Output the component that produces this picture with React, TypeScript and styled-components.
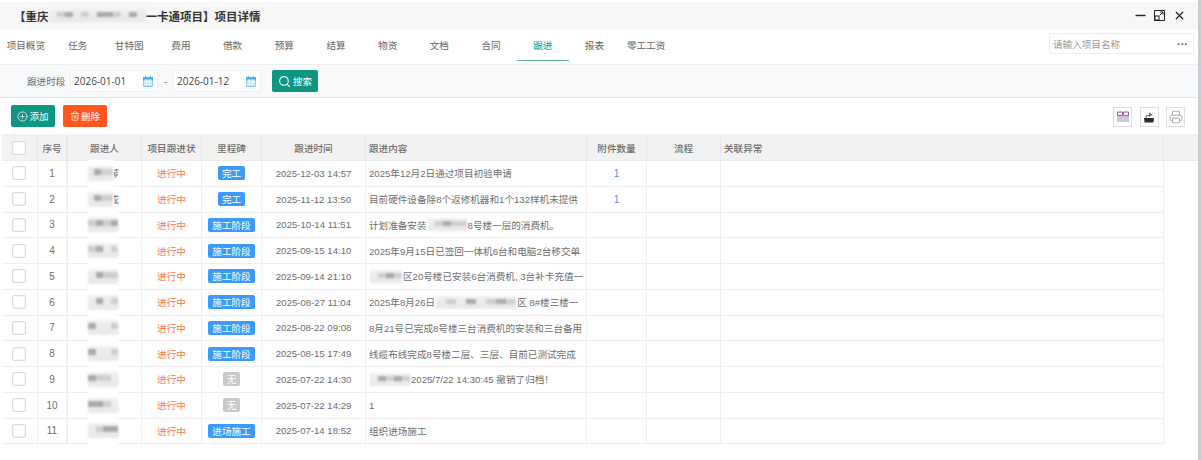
import React from 'react';
import styled, { createGlobalStyle } from 'styled-components';
import { CirclePlus, Printer, Search, Trash2, X } from 'lucide-react';

const GlobalStyle = createGlobalStyle`
  html, body {
    margin: 0;
    padding: 0;
    background: #fff;
    overflow: hidden;
  }
  * {
    box-sizing: border-box;
  }
`;

const FONT = `'Liberation Sans', 'Noto Sans CJK SC', sans-serif`;
const GREEN = '#0f9683';
const COLUMNS = '35px 30px 74px 60px 60px 104px 221px 60px 74px 443px 34px';

const Page = styled.div`
  width: 1201px;
  height: 460px;
  padding-top: 2px;
  border-right: 3px solid #c9ccd5;
  font-family: ${FONT};
  font-size: 9.6px;
  color: #6e6e6e;
  overflow: hidden;
`;
const TitleBar = styled.div`
  height: 27px;
  padding: 0 12px 0 14px;
  display: flex;
  align-items: center;
  justify-content: space-between;
  background: #f7f7f7;
`;
const Title = styled.div`
  display: flex;
  align-items: center;
  font-size: 11.5px;
  font-weight: 700;
  color: #333;
`;
const WindowButtons = styled.div`
  display: flex;
  align-items: center;
  gap: 8px;
  color: #222;
`;
const Mosaic = styled.span<{ $width: number; $height?: number }>`
  display: inline-grid;
  grid-auto-flow: column;
  grid-auto-columns: 1fr;
  width: ${(p) => p.$width}px;
  height: ${(p) => p.$height ?? 13}px;
  vertical-align: middle;
  background: #efefef;
  border-radius: 4px;
  filter: blur(0.8px);
`;
const MosaicCell = styled.span<{ $shade: string }>`
  background: linear-gradient(
    to bottom,
    #f0f0f0 0 22%,
    ${(p) => p.$shade} 22% 62%,
    #e9e9e9 62% 100%
  );
`;
const Tabs = styled.div`
  height: 31px;
  margin-top: 1px;
  padding-right: 4px;
  display: flex;
  align-items: stretch;
  background: #fff;
`;
const Tab = styled.div<{ $active?: boolean }>`
  width: 51.7px;
  display: flex;
  align-items: center;
  justify-content: center;
  white-space: nowrap;
  color: ${(p) => (p.$active ? GREEN : '#666')};
  border-bottom: 1px solid ${(p) => (p.$active ? '#5dba8c' : 'transparent')};
`;
const ProjectSearch = styled.div`
  width: 145px;
  height: 21px;
  margin: 3px 0 0 auto;
  padding: 0 5px 0 3px;
  display: flex;
  align-items: center;
  justify-content: space-between;
  border: 1px solid #eee;
  border-radius: 2px;
  color: #999;
`;
const MoreDots = styled.span`
  color: #555;
  font-size: 11px;
  font-weight: 700;
`;
const FilterBar = styled.div`
  height: 34px;
  margin-top: 3px;
  padding-left: 27px;
  display: flex;
  align-items: center;
  background: #f8f9fb;
  border-top: 1px solid #f0f0f0;
  border-bottom: 1px solid #e4e4e4;
`;
const FilterLabel = styled.span`
  width: 43px;
`;
const DateField = styled.div`
  width: 88px;
  height: 22px;
  padding: 0 4px 0 3px;
  display: flex;
  align-items: center;
  justify-content: space-between;
  background: #fff;
  border: 1px solid #efefef;
  border-radius: 2px;
  font-family: 'Open Sans', ${FONT};
  font-size: 10px;
  color: #444;
`;
const DateDash = styled.span`
  width: 15px;
  text-align: center;
`;
const ActionButton = styled.button<{ $color: string; $width: number }>`
  width: ${(p) => p.$width}px;
  height: 22px;
  padding: 0;
  display: flex;
  align-items: center;
  justify-content: center;
  gap: 1px;
  background: ${(p) => p.$color};
  border: none;
  border-radius: 2px;
  color: #fff;
  font-family: ${FONT};
  font-size: 9.5px;
`;
const SearchButton = styled(ActionButton)`
  margin-left: 11px;
  gap: 2px;
`;
const Toolbar = styled.div`
  height: 37px;
  padding: 7px 13px 0 11px;
  display: flex;
  gap: 8px;
  border-bottom: 1px solid #f2f2f2;
`;
const ToolIcons = styled.div`
  margin-left: auto;
  padding-top: 2px;
  display: flex;
  gap: 7.5px;
`;
const ToolIcon = styled.div`
  width: 19px;
  height: 20px;
  display: flex;
  align-items: center;
  justify-content: center;
  border: 1px solid #dfdfdf;
  background: #fff;
`;
const Grid = styled.div`
  margin-left: 3px;
  width: 1195px;
`;
const HeaderRow = styled.div`
  height: 26px;
  display: grid;
  grid-template-columns: ${COLUMNS};
  margin-left: -1px;
  padding-left: 1px;
  background: #f2f2f2;
  border-top: 1px solid #eee;
  border-bottom: 1px solid #eaeaea;
  font-weight: 500;
`;
const Row = styled.div`
  height: 25.75px;
  display: grid;
  grid-template-columns: ${COLUMNS};
`;
const Cell = styled.div<{ $left?: boolean; $wide?: boolean }>`
  position: relative;
  min-width: 0;
  display: flex;
  align-items: center;
  justify-content: ${(p) => (p.$left ? 'flex-start' : 'center')};
  padding-left: ${(p) => (p.$left ? '3px' : '0')};
  white-space: nowrap;
  overflow: visible;
  border-right: ${(p) => (p.$wide ? 2 : 1)}px solid #efefef;
  border-bottom: 1px solid #eee;
`;
const HeadCell = styled(Cell)`
  border-bottom: none;
  border-right-color: #e7e7e7;
`;
const CheckCell = styled(Cell)`
  padding-right: 3px;
`;
const HeadCheckCell = styled(HeadCell)`
  padding-right: 3px;
`;
const IndexCell = styled(Cell)`
  font-size: 10px;
`;
const Filler = styled.div``;
const Checkbox = styled.span`
  width: 14px;
  height: 14px;
  background: #fff;
  border: 1px solid #dcdcdc;
  border-radius: 2px;
  box-shadow: inset 0 0 0 0.5px #ececec;
`;
const NameSuffix = styled.span`
  margin-left: 19px;
`;
const NameMask = styled.span<{ $width: number }>`
  position: absolute;
  left: 20px;
  top: -1px;
  bottom: -1px;
  width: ${(p) => p.$width}px;
  display: flex;
  align-items: center;
  background: #fff;
`;
const Status = styled.span`
  color: #ff7640;
`;
const Tag = styled.span<{ $muted?: boolean }>`
  height: 14px;
  padding: 0 4px;
  display: flex;
  align-items: center;
  background: ${(p) => (p.$muted ? '#c9c9c9' : '#3a9bfb')};
  border-radius: 2px;
  color: #fff;
`;
const FileCount = styled.span`
  color: #4a97d8;
  font-size: 10px;
`;
const InlineMosaic = styled.span`
  display: inline-flex;
  margin: 0 1px;
`;

const CalendarIcon = () => (
  <svg width="10" height="11" viewBox="0 0 10 11" fill="none">
    <rect x="0.5" y="1.5" width="9" height="9" rx="1" fill="#bfe6f8" stroke="#5cbbe9" />
    <rect x="0" y="1" width="10" height="2.6" fill="#4fb4e6" />
    <path d="M2.5 0v2M7.5 0v2" stroke="#4fb4e6" />
    <path d="M0 6h10M0 8.2h10M3.3 3.5v7M6.7 3.5v7" stroke="#fff" strokeWidth="0.7" />
  </svg>
);

const MinimizeIcon = () => (
  <svg width="11" height="11" viewBox="0 0 11 11">
    <path d="M0.5 5.5h10" stroke="#222" strokeWidth="1.4" />
  </svg>
);

const RestoreIcon = () => (
  <svg width="11" height="11" viewBox="0 0 11 11" fill="none" stroke="#222">
    <path d="M4 0.5h6.5V7M4 .5H.5v10h10V7" />
    <rect x="1" y="6" width="4" height="4" strokeWidth="1" />
    <path d="M9 2 5.8 5.2M6.3 2H9v2.7" />
  </svg>
);

const ColumnsIcon = () => (
  <svg width="12" height="12" viewBox="0 0 12 12" fill="none" strokeWidth="1">
    <path d="M.5 1h5v3.5h-5zM6.5 1h5v3.5h-5z" stroke="#9a5a92" />
    <path d="M1 4.5V11M3 4.5V11M5 4.5V11M7 4.5V11M9 4.5V11M11 4.5V11" stroke="#8072b0" strokeWidth="0.8" />
  </svg>
);

const ExportIcon = () => (
  <svg width="12" height="12" viewBox="0 0 12 12">
    <path d="M1 7h10l-.6 4.5H1.6z" fill="#2a2a2a" />
    <path d="M3.2 7V4.6h3.2" fill="none" stroke="#666" />
    <path d="M6 1.5 9.5 3.8 6 6z" fill="#35708f" />
  </svg>
);

type MaskedTextProps = { width: number; shades: string[]; height?: number };

const MaskedText = ({ width, shades, height }: MaskedTextProps) => (
  <Mosaic $width={width} $height={height}>
    {shades.map((shade, i) => (
      <MosaicCell key={i} $shade={shade} />
    ))}
  </Mosaic>
);

const tabs = ['项目概览', '任务', '甘特图', '费用', '借款', '预算', '结算', '物资', '文档', '合同', '跟进', '报表', '零工工资'];

const headers = ['序号', '跟进人', '项目跟进状', '里程碑', '跟进时间'];

const L = '#ececec';
const M = '#cfcfcf';
const D = '#aaaaaa';

type Record = {
  suffix: string;
  shades: string[];
  stage: string;
  time: string;
  content: React.ReactNode;
  files?: number;
};

const records: Record[] = [
  { suffix: '琴', shades: [L, D, M, M], stage: '完工', time: '2025-12-03 14:57', content: '2025年12月2日通过项目初验申请', files: 1 },
  { suffix: '成', shades: [L, D, M, M], stage: '完工', time: '2025-11-12 13:50', content: '目前硬件设备除8个返修机器和1个132样机未提供', files: 1 },
  { suffix: '森', shades: [M, D, M, D], stage: '施工阶段', time: '2025-10-14 11:51', content: <>计划准备安装<InlineMosaic><MaskedText width={39} shades={[L, M, D, M, M]} /></InlineMosaic>8号楼一层的消费机。</> },
  { suffix: '森', shades: [M, D, L, M], stage: '施工阶段', time: '2025-09-15 14:10', content: '2025年9月15日已签回一体机6台和电脑2台移交单' },
  { suffix: '森', shades: [L, D, M, M], stage: '施工阶段', time: '2025-09-14 21:10', content: <><InlineMosaic><MaskedText width={32} shades={[L, M, D, M]} /></InlineMosaic>区20号楼已安装6台消费机, 3台补卡充值一</> },
  { suffix: '森', shades: [L, D, L, M], stage: '施工阶段', time: '2025-08-27 11:04', content: <>2025年8月26日<InlineMosaic><MaskedText width={80} shades={[L, M, L, D, L, M, D, M]} /></InlineMosaic>区 8#楼三楼一</> },
  { suffix: '森', shades: [D, L, L, M], stage: '施工阶段', time: '2025-08-22 09:08', content: '8月21号已完成8号楼三台消费机的安装和三台备用' },
  { suffix: '森', shades: [D, L, L, M], stage: '施工阶段', time: '2025-08-15 17:49', content: '线缆布线完成8号楼二层、三层、目前已测试完成' },
  { suffix: '森', shades: [D, M, M, L], stage: '无', time: '2025-07-22 14:30', content: <><InlineMosaic><MaskedText width={40} shades={[L, D, M, D, M]} /></InlineMosaic>2025/7/22 14:30:45 撤销了归档！</> },
  { suffix: '森', shades: [D, D, M, L], stage: '无', time: '2025-07-22 14:29', content: '1' },
  { suffix: '森', shades: [L, M, D, D], stage: '进场施工', time: '2025-07-14 18:52', content: '组织进场施工' },
];

export default function App() {
  return (
    <Page>
      <GlobalStyle />
      <TitleBar>
        <Title>
          【重庆
          <MaskedText width={97} shades={[L, M, D, L, M, L, D, D, M, L, D, L]} />
          一卡通项目】项目详情
        </Title>
        <WindowButtons>
          <MinimizeIcon />
          <RestoreIcon />
          <X size={13} strokeWidth={2.2} />
        </WindowButtons>
      </TitleBar>
      <Tabs>
        {tabs.map((tab) => (
          <Tab key={tab} $active={tab === '跟进'}>
            {tab}
          </Tab>
        ))}
        <ProjectSearch>
          <span>请输入项目名称</span>
          <MoreDots>···</MoreDots>
        </ProjectSearch>
      </Tabs>
      <FilterBar>
        <FilterLabel>跟进时段</FilterLabel>
        <DateField>
          2026-01-01
          <CalendarIcon />
        </DateField>
        <DateDash>-</DateDash>
        <DateField>
          2026-01-12
          <CalendarIcon />
        </DateField>
        <SearchButton $color={GREEN} $width={46}>
          <Search size={13} strokeWidth={2} />
          搜索
        </SearchButton>
      </FilterBar>
      <Toolbar>
        <ActionButton $color={GREEN} $width={44}>
          <CirclePlus size={11} strokeWidth={1.6} />
          添加
        </ActionButton>
        <ActionButton $color="#ff5722" $width={44}>
          <Trash2 size={10} strokeWidth={1.8} />
          删除
        </ActionButton>
        <ToolIcons>
          <ToolIcon>
            <ColumnsIcon />
          </ToolIcon>
          <ToolIcon>
            <ExportIcon />
          </ToolIcon>
          <ToolIcon>
            <Printer size={14} color="#9aa0a6" strokeWidth={1.5} />
          </ToolIcon>
        </ToolIcons>
      </Toolbar>
      <Grid>
        <HeaderRow>
          <HeadCheckCell>
            <Checkbox />
          </HeadCheckCell>
          {headers.map((label, i) => (
            <HeadCell key={label} $wide={i === 0}>
              {label}
            </HeadCell>
          ))}
          <HeadCell $left>跟进内容</HeadCell>
          <HeadCell>附件数量</HeadCell>
          <HeadCell>流程</HeadCell>
          <HeadCell $left>关联异常</HeadCell>
          <Filler />
        </HeaderRow>
        {records.map((record, i) => (
          <Row key={record.time}>
            <CheckCell>
              <Checkbox />
            </CheckCell>
            <IndexCell $wide>{i + 1}</IndexCell>
            <Cell>
              <NameSuffix>{record.suffix}</NameSuffix>
              <NameMask $width={record.suffix === '森' ? 30 : 26}>
                <MaskedText width={record.suffix === '森' ? 30 : 25} height={15} shades={record.shades} />
              </NameMask>
            </Cell>
            <Cell>
              <Status>进行中</Status>
            </Cell>
            <Cell>
              <Tag $muted={record.stage === '无'}>{record.stage}</Tag>
            </Cell>
            <Cell>{record.time}</Cell>
            <Cell $left>{record.content}</Cell>
            <Cell>{record.files ? <FileCount>{record.files}</FileCount> : null}</Cell>
            <Cell />
            <Cell />
            <Filler />
          </Row>
        ))}
      </Grid>
    </Page>
  );
}
